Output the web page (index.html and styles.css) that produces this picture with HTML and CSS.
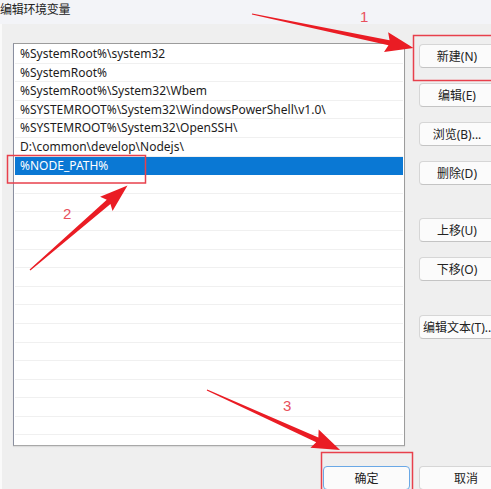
FILE: index.html
```html
<!DOCTYPE html>
<html lang="zh">
<head>
<meta charset="utf-8">
<title>编辑环境变量</title>
<link rel="stylesheet" href="styles.css">
</head>
<body>
<div class="window">
  <div class="titlebar">编辑环境变量</div>
  <div class="body">
    <div class="main">
      <div class="list">
        <div class="row">%SystemRoot%\system32</div>
        <div class="row">%SystemRoot%</div>
        <div class="row">%SystemRoot%\System32\Wbem</div>
        <div class="row">%SYSTEMROOT%\System32\WindowsPowerShell\v1.0\</div>
        <div class="row">%SYSTEMROOT%\System32\OpenSSH\</div>
        <div class="row">D:\common\develop\Nodejs\</div>
        <div class="row selected">%NODE_PATH%</div>
        <div class="row"></div><div class="row"></div><div class="row"></div>
        <div class="row"></div><div class="row"></div><div class="row"></div>
        <div class="row"></div><div class="row"></div><div class="row"></div>
        <div class="row"></div><div class="row"></div><div class="row"></div>
        <div class="row"></div><div class="row"></div>
      </div>
      <div class="side">
        <div class="group">
          <button class="btn">新建(N)</button>
          <button class="btn">编辑(E)</button>
          <button class="btn">浏览(B)...</button>
          <button class="btn">删除(D)</button>
        </div>
        <div class="group move">
          <button class="btn">上移(U)</button>
          <button class="btn">下移(O)</button>
        </div>
        <div class="group text">
          <button class="btn">编辑文本(T)...</button>
        </div>
      </div>
    </div>
    <div class="footer">
      <button class="btn ok">确定</button>
      <button class="btn cancel">取消</button>
    </div>
  </div>
  <svg class="annot" width="491" height="489" viewBox="0 0 491 489">
    <g fill="#ea1c24">
      <polygon transform="translate(252,14) rotate(11.85)" points="0,-0.6 140,-2.6 137,-10 165,0 137,10 140,2.6 0,0.6"/>
      <polygon transform="translate(30,270) rotate(-40.9)" points="0,-0.6 104,-2.8 101,-9.5 129,0 101,9.5 104,2.8 0,0.6"/>
      <polygon transform="translate(207,390) rotate(24.3)" points="0,-0.6 121,-2.6 118,-10 146,0 118,10 121,2.6 0,0.6"/>
    </g>
    <g fill="none" stroke="#e8404c" stroke-width="1.5">
      <rect x="413.5" y="35.5" width="80" height="45"/>
      <rect x="7.5" y="155.5" width="138" height="27.5"/>
      <rect x="321.5" y="452.5" width="91" height="40"/>
    </g>
    <g class="num" fill="#e8505c">
      <text x="360" y="22">1</text>
      <text x="63" y="219">2</text>
      <text x="283" y="411">3</text>
    </g>
  </svg>
</div>
</body>
</html>
```

FILE: styles.css
```css
html, body {
  margin: 0;
  padding: 0;
}
body {
  width: 491px;
  height: 489px;
  overflow: hidden;
  background: #fafafa;
  font-family: "Noto Sans", "Noto Sans CJK SC", sans-serif;
  font-size: 12px;
  color: #1c1c1c;
}
.window {
  position: relative;
  width: 491px;
  height: 489px;
  padding-left: 2px;
  box-sizing: border-box;
}
.titlebar {
  height: 24px;
  background: #f3f4f8;
  font-family: "Noto Sans CJK SC", sans-serif;
  font-size: 12px;
  line-height: 18px;
  color: #222;
  margin-left: -2px;
  letter-spacing: -0.3px;
}
.body {
  background: #efefef;
  height: 465px;
  display: flex;
  flex-direction: column;
}
.main {
  display: flex;
  padding: 19px 0 0 11px;
  gap: 14px;
}
.list {
  width: 388px;
  height: 400px;
  background: #fff;
  border: 1px solid #9c9c9c;
  border-left-color: #8a8fa0;
  border-bottom-color: #a8a8a8;
  box-shadow: 0 1px 1px rgba(0,0,0,0.08);
  padding: 1px 1px 0 1px;
  overflow: hidden;
  flex: none;
}
.row {
  height: 18.6px;
  box-sizing: border-box;
  border-bottom: 1px solid #f0f0f0;
  padding-left: 5px;
  line-height: 18px;
  white-space: nowrap;
  font-size: 12px;
  color: #1c1c1c;
}
.row.selected {
  background: #0a78d4;
  color: #fff;
  border-bottom-color: #0a78d4;
}
.side {
  display: flex;
  flex-direction: column;
  padding-top: 1px;
}
.group {
  display: flex;
  flex-direction: column;
  gap: 15px;
}
.group.move {
  margin-top: 33px;
}
.group.text {
  margin-top: 34px;
}
.btn {
  width: 76px;
  height: 24px;
  box-sizing: border-box;
  background: #fbfbfb;
  border: 1px solid #d6d6d6;
  border-bottom-color: #c4c4c4;
  border-radius: 4px;
  font-family: "Noto Sans", "Noto Sans CJK SC", sans-serif;
  font-size: 12px;
  color: #222;
  padding: 0;
  white-space: nowrap;
  overflow: hidden;
  flex: none;
}
.group.text .btn {
  width: 80px;
  padding-left: 3px;
  text-align: left;
}
.footer {
  display: flex;
  gap: 9px;
  margin-top: 20px;
  padding-left: 321px;
}
.btn.ok {
  width: 87px;
  border: 1px solid #6aa8e6;
}
.btn.cancel {
  width: 94px;
}
.annot {
  position: absolute;
  left: 0;
  top: 0;
  pointer-events: none;
}
.num text {
  font-family: "Liberation Sans", sans-serif;
  font-size: 15px;
}
```
